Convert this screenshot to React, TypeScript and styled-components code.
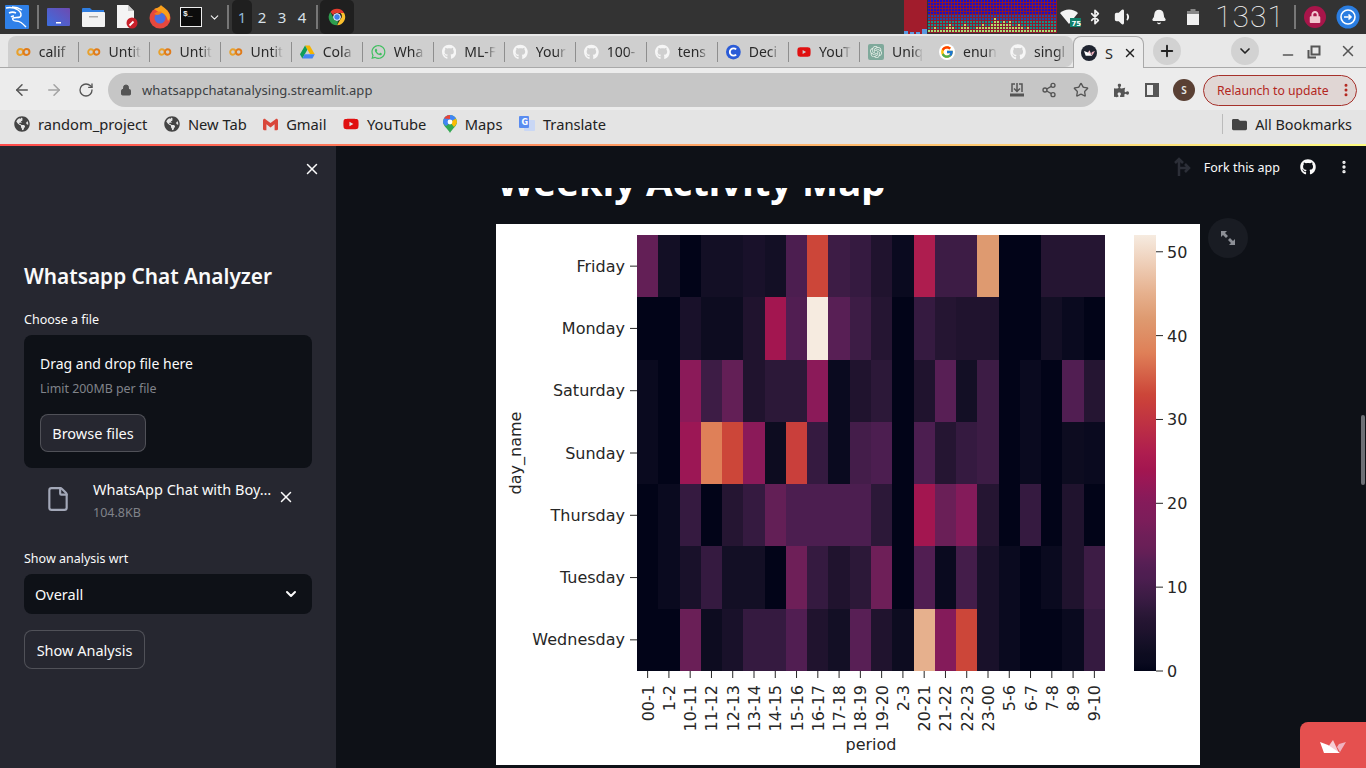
import React from "react";
import styled, { createGlobalStyle } from "styled-components";
import { ArrowLeft, ArrowRight, RotateCw, Lock, Share2, Star, X, ChevronDown, Plus, Minus, MoreVertical, File, Bell, Bluetooth, Volume1 } from "lucide-react";
import { FaGithub, FaWhatsapp, FaYoutube, FaPuzzlePiece, FaFolder, FaGlobeAmericas, FaLock } from "react-icons/fa";
import { FcGoogle } from "react-icons/fc";
import { SiOpenai, SiGmail } from "react-icons/si";

const GlobalStyle = createGlobalStyle`
  html, body { margin: 0; padding: 0; height: 100%; overflow: hidden; background: #0e1117; }
  #root { height: 100%; }
  * { box-sizing: border-box; }
`;

const uiFont = `"Noto Sans", "Open Sans", sans-serif`;

const Page = styled.div`
  width: 1366px;
  height: 768px;
  display: flex;
  flex-direction: column;
  overflow: hidden;
  position: relative;
  font-family: ${uiFont};
`;

/* desktop panel */
const Taskbar = styled.div`
  height: 34px;
  flex: none;
  background: #333333;
  display: flex;
  justify-content: space-between;
  align-items: center;
`;
const PanelGroup = styled.div`
  display: flex;
  align-items: center;
  height: 100%;
`;
const PanelSlot = styled.div<{ $w: number }>`
  width: ${(p) => p.$w}px;
  height: 100%;
  flex: none;
  display: flex;
  align-items: center;
  justify-content: center;
  color: #f2f2f2;
`;
const PanelDivider = styled.div`
  width: 2px;
  height: 24px;
  flex: none;
  background: #777;
`;
const WorkspaceCell = styled.div<{ $active?: boolean }>`
  width: 20px;
  height: 34px;
  display: flex;
  align-items: center;
  justify-content: center;
  font-size: 15px;
  color: ${(p) => (p.$active ? "#8fb8d8" : "#d8e0e8")};
  background: ${(p) => (p.$active ? "#1f1f1f" : "transparent")};
  border-radius: 5px;
`;
const DarkDock = styled.div`
  width: 34px;
  height: 34px;
  background: #1f1f1f;
  border-radius: 5px;
  display: flex;
  align-items: center;
  justify-content: center;
`;
const Clock = styled.div`
  width: 74px;
  height: 34px;
  text-align: center;
  white-space: nowrap;
  font-family: "Roboto", sans-serif;
  font-weight: 100;
  font-size: 30px;
  letter-spacing: 1px;
  line-height: 34px;
  color: #f4f4f4;
`;
const LockBadge = styled.div`
  width: 22px;
  height: 22px;
  border-radius: 50%;
  background: #a8154a;
  color: #f2c8d0;
  display: flex;
  align-items: center;
  justify-content: center;
`;

/* tab strip */
const TabStrip = styled.div`
  height: 34px;
  flex: none;
  background: #e8e8e8;
  border-bottom: 1px solid #a9a9a9;
  display: flex;
  align-items: flex-end;
  padding-left: 8px;
`;
const TabGroup = styled.div`
  display: flex;
  height: 31px;
  background: #cfcfcf;
  border-radius: 8px 8px 8px 0;
`;
const Tab = styled.div`
  width: 71px;
  height: 100%;
  flex: none;
  display: flex;
  align-items: center;
  padding-left: 8px;
  gap: 8px;
`;
const TabTitle = styled.span`
  width: 34px;
  white-space: nowrap;
  font-size: 14px;
  color: #2a2a2a;
  -webkit-mask-image: linear-gradient(90deg, #000 65%, transparent);
  mask-image: linear-gradient(90deg, #000 65%, transparent);
`;
const TabSeparator = styled.div`
  width: 1px;
  height: 20px;
  margin-left: auto;
  background: #8e8e8e;
`;
const ActiveTab = styled.div`
  width: 71px;
  height: 32px;
  flex: none;
  margin-bottom: -1px;
  background: #ececec;
  border: 1px solid #a9a9a9;
  border-bottom: none;
  border-radius: 8px 8px 0 0;
  display: flex;
  align-items: center;
  padding-left: 7px;
  gap: 8px;
  font-size: 14.5px;
  color: #2a2a2a;
`;
const TabClose = styled.div`
  display: flex;
  margin-left: 2px;
  color: #222;
`;
const RoundButton = styled.div<{ $ml: number }>`
  width: 28px;
  height: 28px;
  flex: none;
  margin-left: ${(p) => p.$ml}px;
  margin-bottom: 2px;
  border-radius: 50%;
  background: #d2d2d2;
  display: flex;
  align-items: center;
  justify-content: center;
  color: #222;
`;
const WindowButton = styled.div<{ $ml: number; $mb?: number }>`
  margin-left: ${(p) => p.$ml}px;
  margin-bottom: ${(p) => p.$mb ?? 8}px;
  display: flex;
  color: #555;
`;

/* address bar */
const Toolbar = styled.div`
  height: 42px;
  flex: none;
  background: #ececec;
  display: flex;
  align-items: center;
  padding: 2px 0 0 6px;
`;
const NavIcon = styled.div<{ $faded?: boolean }>`
  width: 32px;
  display: flex;
  justify-content: center;
  color: ${(p) => (p.$faded ? "#a3a3a3" : "#555")};
`;
const Omnibox = styled.div`
  width: 990px;
  height: 34px;
  margin-left: 6px;
  border-radius: 17px;
  background: #c6c6c6;
  display: flex;
  align-items: center;
  padding: 0 9px 0 12px;
  color: #555;
`;
const UrlText = styled.span`
  margin-left: 10px;
  flex: 1;
  font-size: 13px;
  letter-spacing: 0.05px;
  color: #3c4043;
`;
const OmniIcons = styled.div`
  display: flex;
  gap: 16px;
  align-items: center;
`;
const ExtIcons = styled.div`
  display: flex;
  align-items: center;
  gap: 16px;
  margin-left: 16px;
  color: #555;
`;
const Avatar = styled.div`
  width: 22px;
  height: 22px;
  margin-left: -2px;
  border-radius: 50%;
  background: #5a4034;
  color: #e8e8e8;
  font-size: 10px;
  font-weight: 600;
  display: flex;
  align-items: center;
  justify-content: center;
`;
const RelaunchPill = styled.div`
  width: 154px;
  height: 31px;
  margin-left: 8px;
  border: 1px solid #a6312b;
  border-radius: 16px;
  background: #e0d6d4;
  color: #b3261e;
  font-size: 12.2px;
  display: flex;
  align-items: center;
  justify-content: space-between;
  padding-left: 13px;
  padding-right: 2px;
`;

/* bookmarks */
const BookmarkBar = styled.div`
  height: 34px;
  flex: none;
  background: #e4e4e4;
  display: flex;
  align-items: center;
  justify-content: space-between;
  padding: 0 14px 6px 14px;
`;
const BookmarkList = styled.div`
  display: flex;
  align-items: center;
  gap: 16.5px;
`;
const Bookmark = styled.div`
  display: flex;
  align-items: center;
  gap: 8px;
  font-size: 14.7px;
  color: #222;
  svg { flex: none; }
`;
const AllBookmarks = styled(Bookmark)`
  height: 20px;
  border-left: 1px solid #bbb;
  padding-left: 9px;
  font-size: 14.4px;
  color: #444;
  span { color: #222; }
`;

const Decoration = styled.div`
  height: 2px;
  flex: none;
  background: linear-gradient(90deg, rgb(255, 75, 75), rgb(255, 253, 128));
`;

/* streamlit app */
const AppRow = styled.div`
  flex: 1;
  min-height: 0;
  display: flex;
`;
const Sidebar = styled.aside`
  width: 336px;
  flex: none;
  background: #262730;
  padding: 14px 24px 0;
  color: #fafafa;
`;
const SidebarClose = styled.div`
  display: flex;
  justify-content: flex-end;
  margin-right: -9px;
  height: 20px;
`;
const SidebarTitle = styled.h2`
  margin: 80px 0 0;
  font-size: 20.8px;
  line-height: 32px;
  font-weight: 600;
`;
const FieldLabel = styled.div<{ $mt: number }>`
  margin-top: ${(p) => p.$mt}px;
  font-size: 12.5px;
  line-height: 18px;
  color: #fafafa;
`;
const DropZone = styled.div`
  margin-top: 6px;
  height: 133px;
  background: #0e1117;
  border-radius: 8px;
  padding: 18px 16px;
`;
const DropTitle = styled.div`
  font-size: 14px;
  line-height: 22px;
`;
const DropHint = styled.div`
  margin-top: 5px;
  font-size: 12.4px;
  line-height: 18px;
  color: #80838a;
`;
const OutlineButton = styled.button<{ $w: number; $h: number }>`
  width: ${(p) => p.$w}px;
  height: ${(p) => p.$h}px;
  display: block;
  padding: 0;
  border-radius: 8px;
  border: 1px solid rgba(250, 250, 250, 0.2);
  background: #262730;
  color: #fafafa;
  font-family: inherit;
  font-size: 14.5px;
`;
const BrowseButton = styled(OutlineButton)`
  margin-top: 16px;
`;
const FileRow = styled.div`
  display: flex;
  align-items: flex-start;
  margin-top: 10px;
  height: 44px;
`;
const FileGlyph = styled.div`
  width: 69px;
  padding: 8px 0 0 21px;
  color: #a3a8b8;
  flex: none;
`;
const FileMeta = styled.div`
  width: 180px;
  flex: none;
`;
const FileName = styled.div`
  font-size: 14.5px;
  line-height: 22px;
  white-space: nowrap;
`;
const FileSize = styled.div`
  margin-top: 3px;
  font-size: 12.5px;
  line-height: 19px;
  color: #80838a;
`;
const FileRemove = styled.div`
  margin: 10px 0 0 4px;
  display: flex;
`;
const SelectBox = styled.div`
  margin-top: 6px;
  height: 40px;
  border-radius: 8px;
  background: #0e1117;
  display: flex;
  align-items: center;
  justify-content: space-between;
  padding: 0 13px 0 11px;
  font-size: 14.5px;
`;
const ShowButton = styled(OutlineButton)`
  margin-top: 16px;
`;

const Main = styled.main`
  flex: 1;
  min-width: 0;
  background: #0e1117;
  color: #fff;
  display: flex;
  flex-direction: column;
`;
const MainHeader = styled.header`
  height: 42px;
  flex: none;
  display: flex;
  justify-content: flex-end;
  align-items: center;
  padding-right: 14px;
  font-size: 12.5px;
  color: #fafafa;
`;
const ForkIcon = styled.div`
  display: flex;
  margin-right: 11px;
`;
const HeaderIcon = styled.div<{ $ml: number }>`
  display: flex;
  margin-left: ${(p) => p.$ml}px;
`;
const ContentColumn = styled.div`
  padding-left: 160px;
`;
const TitleClip = styled.div`
  height: 36px;
  overflow: hidden;
`;
const PageTitle = styled.h2`
  margin: -29px 0 0 1px;
  font-size: 38.3px;
  line-height: 44px;
  font-weight: 700;
  white-space: nowrap;
`;
const FigureRow = styled.div`
  display: flex;
  align-items: flex-start;
`;
const Figure = styled.svg`
  display: block;
  flex: none;
  background: #fff;
  font-family: "DejaVu Sans", sans-serif;
  font-size: 16px;
  fill: #262626;
`;
const ExpandButton = styled.div`
  width: 40px;
  height: 40px;
  margin: -6px 0 0 8px;
  border-radius: 50%;
  background: #191c23;
  display: flex;
  align-items: center;
  justify-content: center;
`;
const ScrollThumb = styled.div`
  position: absolute;
  right: 1px;
  top: 415px;
  width: 4px;
  height: 70px;
  border-radius: 2px;
  background: #6d7076;
`;
const Badge = styled.div`
  position: absolute;
  right: 0;
  bottom: 0;
  width: 66px;
  height: 46px;
  border-top-left-radius: 8px;
  background: #e5504f;
  display: flex;
  align-items: center;
  justify-content: center;
  padding-top: 2px;
`;

/* drawings */
const Kali = () => (
  <svg width="24" height="24" viewBox="0 0 24 24">
    <rect width="24" height="24" fill="#2f80e8" rx="1" />
    <path d="M1 3c5-1 9 0 12 2 3 2 4 5 2 7-2 1-5 0-7 1-1 1 0 3 3 3 4 0 6 2 10 6M7 2c3 0 7 1 10 3M4 8c2-1 5-1 7 0M6 12c1-1 2-1 3-1" fill="none" stroke="#fff" strokeWidth="1.5" />
  </svg>
);
const Launcher = () => (
  <svg width="23" height="18" viewBox="0 0 23 18">
    <defs>
      <linearGradient id="lg" x1="0" y1="1" x2="1" y2="0">
        <stop offset="0" stopColor="#3c6fe0" />
        <stop offset="1" stopColor="#6e4ab0" />
      </linearGradient>
    </defs>
    <rect width="23" height="18" rx="1" fill="url(#lg)" />
    <rect x="9" y="14" width="5" height="1.5" fill="#fff" />
  </svg>
);
const FilesIcon = () => (
  <svg width="23" height="20" viewBox="0 0 23 20">
    <path d="M0 2a1 1 0 0 1 1-1h7l2 2h12v4H0z" fill="#2f7de0" />
    <rect y="5" width="23" height="15" rx="1" fill="#f2f2f2" />
    <rect x="7" y="9" width="9" height="1.5" fill="#aaa" />
  </svg>
);
const DocIcon = () => (
  <svg width="22" height="24" viewBox="0 0 22 24">
    <path d="M1 0h11l6 6v17H1z" fill="#f4f4f4" />
    <path d="M12 0l6 6h-6z" fill="#ccc" />
    <circle cx="16" cy="18" r="5.5" fill="#c8202a" />
    <path d="M13.5 20.5l4-4" stroke="#fff" strokeWidth="1.8" />
  </svg>
);
const Firefox = () => (
  <svg width="22" height="24" viewBox="0 0 22 24">
    <circle cx="11" cy="13" r="10.5" fill="#e6483d" />
    <path d="M5 4c5-1 6-3 7-4 1 2 8 4 9 12 0 2-1 3-2 4-1-5-4-8-8-8z" fill="#f9a01b" />
    <circle cx="11" cy="13" r="5.5" fill="#4a6fe0" />
    <path d="M5 9c2-2 5-3 8-2-1 2-3 3-5 3z" fill="#f47a20" />
  </svg>
);
const Terminal = () => (
  <svg width="22" height="20" viewBox="0 0 22 20">
    <rect x="0.5" y="0.5" width="21" height="19" fill="#0c0c0c" stroke="#eee" />
    <text x="3" y="9" fontFamily="Liberation Mono" fontSize="8" fontWeight="700" fill="#eee">$_</text>
  </svg>
);
const Chrome = () => (
  <svg width="18" height="18" viewBox="0 0 24 24">
    <path d="M12 1a11 11 0 0 1 9.5 5.5H12a5.5 5.5 0 0 0-5 3L3.2 5.3A11 11 0 0 1 12 1z" fill="#e33b2e" />
    <path d="M21.5 6.5A11 11 0 0 1 12 23l4.7-8.2a5.5 5.5 0 0 0 0-8.3z" fill="#fbc02d" />
    <path d="M12 23A11 11 0 0 1 3.2 5.3l4.7 8.9a5.5 5.5 0 0 0 5.6 3.1z" fill="#2e9e4f" />
    <circle cx="12" cy="12" r="4.5" fill="#3f7ee8" stroke="#fff" strokeWidth="1.3" />
  </svg>
);
const Spectrum = () => {
  const cells: React.ReactElement[] = [];
  const peaks = [1, 1, 2, 1, 1, 1, 2, 3, 2, 1, 1, 2, 3, 2, 1, 1, 2, 2, 3, 2, 2, 3, 5, 4, 3, 4, 3, 4, 2, 2, 3, 2, 1, 2, 1, 1, 1, 1, 1, 1, 1, 1, 1];
  peaks.forEach((peak, c) => {
    for (let r = 0; r < 11; r++) {
      const level = 10 - r;
      const fill = level < peak ? "#a8e070" : level < 4 ? "#12908a" : level < 6 ? "#1a4bb0" : "#1a10c8";
      cells.push(<rect key={`${c}-${r}`} x={c * 3} y={r * 3} width="2" height="2" fill={fill} />);
    }
  });
  return (
    <svg width="129" height="34" viewBox="0 0 129 34">
      <rect width="129" height="33" fill="#8e1a2e" />
      {cells}
    </svg>
  );
};
const CpuGraph = () => (
  <svg width="23" height="34" viewBox="0 0 23 34">
    <rect width="23" height="34" fill="#a11c2c" />
    <rect y="31" width="4" height="3" fill="#5a9ae0" />
    <rect x="6" y="32" width="4" height="2" fill="#5a9ae0" />
    <rect x="12" y="32" width="4" height="2" fill="#5a9ae0" />
    <rect x="18" y="29" width="5" height="5" fill="#5a9ae0" />
  </svg>
);
const Wifi = () => (
  <svg width="22" height="22" viewBox="0 0 22 22">
    <path d="M0 7a13 13 0 0 1 18 0l-9 11z" fill="#f4f4f4" />
    <rect x="10" y="12" width="11" height="9" fill="#12806a" />
    <text x="11.5" y="20" fontSize="7" fontWeight="700" fontFamily="DejaVu Sans" fill="#fff">75</text>
  </svg>
);
const Battery = () => (
  <svg width="12" height="16" viewBox="0 0 12 16">
    <rect x="3.5" y="0" width="5" height="2" fill="#888" />
    <rect y="2" width="12" height="3" fill="#888" />
    <rect y="5" width="12" height="11" fill="#f0f0f0" />
  </svg>
);
const GoCircle = () => (
  <svg width="24" height="24" viewBox="0 0 24 24">
    <circle cx="12" cy="12" r="11.5" fill="#2a7de1" />
    <circle cx="12" cy="12" r="7" fill="none" stroke="#fff" strokeWidth="1.6" />
    <path d="M8 12h7M12.5 9.5l2.5 2.5-2.5 2.5" fill="none" stroke="#fff" strokeWidth="1.6" />
  </svg>
);
const Colab = () => (
  <svg width="16" height="10" viewBox="0 0 16 10">
    <circle cx="4.6" cy="5" r="3.2" fill="none" stroke="#e8a12d" strokeWidth="2.2" />
    <circle cx="11.4" cy="5" r="3.2" fill="none" stroke="#e07b1a" strokeWidth="2.2" />
  </svg>
);
const Drive = () => (
  <svg width="16" height="14" viewBox="0 0 16 14">
    <path d="M5.5 0h5L16 9.5h-5z" fill="#f4b400" />
    <path d="M5.5 0L0 9.5 2.5 14 8 4.5z" fill="#0f9d58" />
    <path d="M2.5 14h11L16 9.5H5z" fill="#4285f4" />
  </svg>
);
const Deci = () => (
  <svg width="16" height="16" viewBox="0 0 16 16">
    <circle cx="8" cy="8" r="8" fill="#2a5bd7" />
    <path d="M11 5.2a4 4 0 1 0 0 5.6" fill="none" stroke="#fff" strokeWidth="2" />
  </svg>
);
const OpenAiTile = styled.div`
  width: 16px;
  height: 16px;
  flex: none;
  background: #7fa99b;
  display: flex;
  align-items: center;
  justify-content: center;
  border-radius: 2px;
  color: #e8efe9;
`;
const GoogleTile = styled.div`
  width: 16px;
  height: 16px;
  flex: none;
  border-radius: 50%;
  background: #fff;
  display: flex;
  align-items: center;
  justify-content: center;
`;
const Crown = ({ w = 26, h = 13 }: { w?: number; h?: number }) => (
  <svg width={w} height={h} viewBox="0 0 26 13">
    <path d="M13 0L8 7 19 13z" fill="#f6cdd5" />
    <path d="M26 2l-7 2-2 3 3 5z" fill="#f0b2bf" />
    <path d="M0 2l4 11h16L8 5z" fill="#fff" />
  </svg>
);
const StreamlitFavicon = styled.div`
  width: 16px;
  height: 16px;
  flex: none;
  border-radius: 50%;
  background: #1f2430;
  display: flex;
  align-items: center;
  justify-content: center;
`;
const InstallIcon = () => (
  <svg width="16" height="16" viewBox="0 0 16 16" fill="none" stroke="#555" strokeWidth="1.5">
    <path d="M3 10V2h3M13 10V2h-3M8 1v8M5 6.5l3 3 3-3" />
    <rect x="1" y="11.5" width="14" height="3" fill="#555" stroke="none" />
  </svg>
);
const PanelIcon = () => (
  <svg width="14" height="14" viewBox="0 0 14 14">
    <rect x="1" y="1" width="12" height="12" fill="none" stroke="#555" strokeWidth="2" />
    <rect x="8" y="1" width="5" height="12" fill="#555" />
  </svg>
);
const RestoreIcon = () => (
  <svg width="14" height="14" viewBox="0 0 14 14" fill="none" stroke="#555" strokeWidth="2">
    <rect x="4.5" y="1.5" width="8" height="8" />
    <path d="M1.5 5v7.5H9" />
  </svg>
);
const MapsIcon = () => (
  <svg width="14" height="18" viewBox="0 0 14 18">
    <path d="M7 0a7 7 0 0 1 7 7c0 4-5 7-7 11-2-4-7-7-7-11a7 7 0 0 1 7-7z" fill="#34a853" />
    <path d="M7 0a7 7 0 0 1 6 3.5L3 11C1 9.5 0 8 0 7a7 7 0 0 1 7-7z" fill="#4285f4" />
    <path d="M1 3.5A7 7 0 0 1 7 0v4z" fill="#ea4335" />
    <path d="M14 7c0 1-1 3-3 5L7 7l6-3.5z" fill="#fbbc04" />
    <circle cx="7" cy="7" r="2.4" fill="#fff" />
  </svg>
);
const TranslateIcon = () => (
  <svg width="16" height="16" viewBox="0 0 16 16">
    <rect x="5" y="4" width="11" height="11" rx="1" fill="#c9d7f5" />
    <rect width="10" height="12" rx="1" fill="#5a8cf0" />
    <text x="2.5" y="9" fontSize="8" fontWeight="700" fontFamily="DejaVu Sans" fill="#fff">G</text>
  </svg>
);
const ForkArrows = () => (
  <svg width="20" height="20" viewBox="0 0 20 20" fill="none" stroke="#2c2f38" strokeWidth="2.5">
    <path d="M6 19V3M2 6l4-4 4 4M6 11h9M12 7l4 4-4 4" />
  </svg>
);
const ExpandArrows = () => (
  <svg width="16" height="16" viewBox="0 0 16 16" fill="#8c8f96">
    <path d="M1 1h6L5 3l3 3-2 2-3-3-2 2z" />
    <path d="M15 15H9l2-2-3-3 2-2 3 3 2-2z" />
  </svg>
);

const tabs: { label: string; icon: React.ReactNode }[] = [
  { label: "calif", icon: <Colab /> },
  { label: "Untit", icon: <Colab /> },
  { label: "Untit", icon: <Colab /> },
  { label: "Untit", icon: <Colab /> },
  { label: "Cola", icon: <Drive /> },
  { label: "Wha", icon: <FaWhatsapp size={16} color="#3fbf5f" /> },
  { label: "ML-F", icon: <FaGithub size={16} color="#f6f6f6" /> },
  { label: "Your", icon: <FaGithub size={16} color="#f6f6f6" /> },
  { label: "100-", icon: <FaGithub size={16} color="#f6f6f6" /> },
  { label: "tens", icon: <FaGithub size={16} color="#f6f6f6" /> },
  { label: "Deci", icon: <Deci /> },
  { label: "YouT", icon: <FaYoutube size={16} color="#e01010" /> },
  { label: "Uniq", icon: <OpenAiTile><SiOpenai size={12} /></OpenAiTile> },
  { label: "enun", icon: <GoogleTile><FcGoogle size={14} /></GoogleTile> },
  { label: "singl", icon: <FaGithub size={16} color="#f6f6f6" /> },
];

const bookmarks: { label: string; icon: React.ReactNode }[] = [
  { label: "random_project", icon: <FaGlobeAmericas size={16} color="#444" /> },
  { label: "New Tab", icon: <FaGlobeAmericas size={16} color="#444" /> },
  { label: "Gmail", icon: <SiGmail size={15} color="#d9473b" /> },
  { label: "YouTube", icon: <FaYoutube size={16} color="#e01010" /> },
  { label: "Maps", icon: <MapsIcon /> },
  { label: "Translate", icon: <TranslateIcon /> },
];

/* heatmap data */
const days = ["Friday", "Monday", "Saturday", "Sunday", "Thursday", "Tuesday", "Wednesday"];
const periods = ["00-1", "1-2", "10-11", "11-12", "12-13", "13-14", "14-15", "15-16", "16-17", "17-18", "18-19", "19-20", "2-3", "20-21", "21-22", "22-23", "23-00", "5-6", "6-7", "7-8", "8-9", "9-10"];
const values = [
  [14, 3, 0, 3, 3, 4, 3, 11, 33, 9, 8, 5, 1, 26, 9, 9, 42, 0, 0, 6, 6, 6],
  [0, 0, 4, 2, 2, 5, 24, 12, 52, 13, 9, 6, 0, 8, 6, 5, 5, 0, 0, 3, 1, 0],
  [1, 0, 21, 9, 14, 5, 7, 7, 21, 1, 5, 7, 0, 5, 13, 3, 9, 0, 1, 0, 12, 6],
  [1, 0, 23, 38, 33, 21, 2, 32, 8, 1, 10, 11, 0, 11, 6, 8, 9, 0, 1, 0, 2, 1],
  [0, 1, 8, 0, 6, 8, 14, 11, 11, 11, 11, 7, 0, 24, 15, 19, 6, 0, 8, 0, 5, 0],
  [0, 1, 4, 8, 3, 3, 0, 16, 8, 5, 7, 16, 0, 12, 1, 10, 4, 1, 0, 1, 5, 9],
  [0, 0, 15, 2, 4, 8, 8, 12, 5, 3, 13, 5, 2, 45, 20, 33, 4, 1, 0, 0, 1, 8],
];
const colorStops: [number, string][] = [
  [0, "#020418"], [1, "#0a0a1f"], [2, "#0d0c20"], [3, "#130f25"], [4, "#19112a"], [5, "#20132e"],
  [6, "#251532"], [7, "#2c1838"], [8, "#351a40"], [9, "#3d1c45"], [10, "#441d4a"], [11, "#4c1e50"],
  [12, "#511e52"], [13, "#581f55"], [14, "#631f56"], [15, "#6a1f57"], [16, "#6e1f58"], [18, "#7c1d5a"],
  [20, "#841b5a"], [21, "#8b1a59"], [23, "#9c1755"], [24, "#a31650"], [26, "#ae1d4f"], [32, "#c93f3b"],
  [33, "#cc4639"], [38, "#df8058"], [42, "#de9a70"], [45, "#e6b08d"], [52, "#f6ebe0"],
];
const colorFor = (v: number) => colorStops.find((s) => s[0] >= v)?.[1] ?? "#f6ebe0";

const Heatmap = () => {
  const left = 141;
  const top = 11;
  const w = 468;
  const h = 436;
  const cw = w / periods.length;
  const ch = h / days.length;
  return (
    <Figure width="704" height="541" viewBox="0 0 704 541">
      <defs>
        <linearGradient id="bar" x1="0" y1="1" x2="0" y2="0">
          {colorStops.map(([v, c]) => (
            <stop key={v} offset={v / 52} stopColor={c} />
          ))}
        </linearGradient>
      </defs>
      {values.map((row, r) =>
        row.map((v, c) => {
          const x0 = Math.round(left + c * cw);
          const x1 = Math.round(left + (c + 1) * cw);
          const y0 = Math.round(top + r * ch);
          const y1 = Math.round(top + (r + 1) * ch);
          return <rect key={`${r}-${c}`} x={x0} y={y0} width={x1 - x0} height={y1 - y0} fill={colorFor(v)} />;
        })
      )}
      {days.map((d, r) => (
        <g key={d}>
          <line x1={left - 7} x2={left} y1={top + (r + 0.5) * ch} y2={top + (r + 0.5) * ch} stroke="#262626" strokeWidth="1" />
          <text x={left - 12} y={top + (r + 0.5) * ch + 5.5} textAnchor="end">{d}</text>
        </g>
      ))}
      {periods.map((p, c) => {
        const x = left + (c + 0.5) * cw;
        return (
          <g key={p}>
            <line x1={x} x2={x} y1={top + h} y2={top + h + 7} stroke="#262626" strokeWidth="1" />
            <text transform={`translate(${x + 6} ${top + h + 14}) rotate(-90)`} textAnchor="end">{p}</text>
          </g>
        );
      })}
      <text transform="translate(25 229) rotate(-90)" textAnchor="middle">day_name</text>
      <text x="375" y="526" textAnchor="middle">period</text>
      <rect x="638" y={top} width="22" height={h} fill="url(#bar)" />
      {[0, 10, 20, 30, 40, 50].map((t) => {
        const y = top + h - (t / 52) * h;
        return (
          <g key={t}>
            <line x1="660" x2="667" y1={y} y2={y} stroke="#262626" strokeWidth="1" />
            <text x="671" y={y + 6}>{t}</text>
          </g>
        );
      })}
    </Figure>
  );
};

export default function App() {
  return (
    <Page>
      <GlobalStyle />
      <Taskbar>
        <PanelGroup>
          <PanelSlot $w={34}><Kali /></PanelSlot>
          <PanelSlot $w={3} />
          <PanelDivider />
          <PanelSlot $w={8} />
          <PanelSlot $w={23}><Launcher /></PanelSlot>
          <PanelSlot $w={11} />
          <PanelSlot $w={24}><FilesIcon /></PanelSlot>
          <PanelSlot $w={11} />
          <PanelSlot $w={22}><DocIcon /></PanelSlot>
          <PanelSlot $w={11} />
          <PanelSlot $w={22}><Firefox /></PanelSlot>
          <PanelSlot $w={9} />
          <PanelSlot $w={22}><Terminal /></PanelSlot>
          <PanelSlot $w={25}><ChevronDown size={13} /></PanelSlot>
          <PanelDivider />
          <PanelSlot $w={3} />
          <WorkspaceCell $active>1</WorkspaceCell>
          <WorkspaceCell>2</WorkspaceCell>
          <WorkspaceCell>3</WorkspaceCell>
          <WorkspaceCell>4</WorkspaceCell>
          <PanelSlot $w={4} />
          <PanelDivider />
          <PanelSlot $w={2} />
          <DarkDock><Chrome /></DarkDock>
        </PanelGroup>
        <PanelGroup>
          <CpuGraph />
          <PanelSlot $w={1} />
          <Spectrum />
          <PanelSlot $w={2} />
          <PanelSlot $w={24}><Wifi /></PanelSlot>
          <PanelSlot $w={24}><Bluetooth size={16} strokeWidth={2.5} /></PanelSlot>
          <PanelSlot $w={34}><Volume1 size={20} fill="#f2f2f2" /></PanelSlot>
          <PanelSlot $w={36}><Bell size={16} fill="#f2f2f2" /></PanelSlot>
          <PanelSlot $w={32}><Battery /></PanelSlot>
          <PanelSlot $w={4} />
          <Clock>1331</Clock>
          <PanelSlot $w={7} />
          <PanelDivider />
          <PanelSlot $w={38}><LockBadge><FaLock size={12} /></LockBadge></PanelSlot>
          <PanelSlot $w={28}><GoCircle /></PanelSlot>
          <PanelSlot $w={4} />
        </PanelGroup>
      </Taskbar>

      <TabStrip>
        <TabGroup>
          {tabs.map((t, i) => (
            <Tab key={i}>
              {t.icon}
              <TabTitle>{t.label}</TabTitle>
              {i < tabs.length - 1 && <TabSeparator />}
            </Tab>
          ))}
        </TabGroup>
        <ActiveTab>
          <StreamlitFavicon><Crown w={11} h={6} /></StreamlitFavicon>
          <span>S</span>
          <TabClose><X size={14} strokeWidth={2.5} /></TabClose>
        </ActiveTab>
        <RoundButton $ml={9}><Plus size={18} strokeWidth={2.5} /></RoundButton>
        <RoundButton $ml={50}><ChevronDown size={16} strokeWidth={2.5} /></RoundButton>
        <WindowButton $ml={21} $mb={4}><Minus size={16} /></WindowButton>
        <WindowButton $ml={11}><RestoreIcon /></WindowButton>
        <WindowButton $ml={18} $mb={7}><X size={18} /></WindowButton>
      </TabStrip>

      <Toolbar>
        <NavIcon><ArrowLeft size={18} /></NavIcon>
        <NavIcon $faded><ArrowRight size={18} /></NavIcon>
        <NavIcon><RotateCw size={16} /></NavIcon>
        <Omnibox>
          <Lock size={12} fill="#555" />
          <UrlText>whatsappchatanalysing.streamlit.app</UrlText>
          <OmniIcons>
            <InstallIcon />
            <Share2 size={16} />
            <Star size={16} />
          </OmniIcons>
        </Omnibox>
        <ExtIcons>
          <FaPuzzlePiece size={15} />
          <PanelIcon />
          <Avatar>S</Avatar>
        </ExtIcons>
        <RelaunchPill>
          Relaunch to update
          <MoreVertical size={16} strokeWidth={2.5} />
        </RelaunchPill>
      </Toolbar>

      <BookmarkBar>
        <BookmarkList>
          {bookmarks.map((b) => (
            <Bookmark key={b.label}>
              {b.icon}
              {b.label}
            </Bookmark>
          ))}
        </BookmarkList>
        <AllBookmarks>
          <FaFolder size={15} />
          <span>All Bookmarks</span>
        </AllBookmarks>
      </BookmarkBar>
      <Decoration />

      <AppRow>
        <Sidebar>
          <SidebarClose><X size={18} /></SidebarClose>
          <SidebarTitle>Whatsapp Chat Analyzer</SidebarTitle>
          <FieldLabel $mt={19}>Choose a file</FieldLabel>
          <DropZone>
            <DropTitle>Drag and drop file here</DropTitle>
            <DropHint>Limit 200MB per file</DropHint>
            <BrowseButton $w={106} $h={38}>Browse files</BrowseButton>
          </DropZone>
          <FileRow>
            <FileGlyph><File size={26} strokeWidth={2} /></FileGlyph>
            <FileMeta>
              <FileName>WhatsApp Chat with Boy…</FileName>
              <FileSize>104.8KB</FileSize>
            </FileMeta>
            <FileRemove><X size={18} /></FileRemove>
          </FileRow>
          <FieldLabel $mt={28}>Show analysis wrt</FieldLabel>
          <SelectBox>
            Overall
            <ChevronDown size={16} strokeWidth={3} />
          </SelectBox>
          <ShowButton $w={121} $h={39}>Show Analysis</ShowButton>
        </Sidebar>
        <Main>
          <MainHeader>
            <ForkIcon><ForkArrows /></ForkIcon>
            Fork this app
            <HeaderIcon $ml={20}><FaGithub size={16} /></HeaderIcon>
            <HeaderIcon $ml={20}><MoreVertical size={16} strokeWidth={3} /></HeaderIcon>
          </MainHeader>
          <ContentColumn>
            <TitleClip>
              <PageTitle>Weekly Activity Map</PageTitle>
            </TitleClip>
            <FigureRow>
              <Heatmap />
              <ExpandButton><ExpandArrows /></ExpandButton>
            </FigureRow>
          </ContentColumn>
        </Main>
      </AppRow>
      <ScrollThumb />
      <Badge><Crown /></Badge>
    </Page>
  );
}
